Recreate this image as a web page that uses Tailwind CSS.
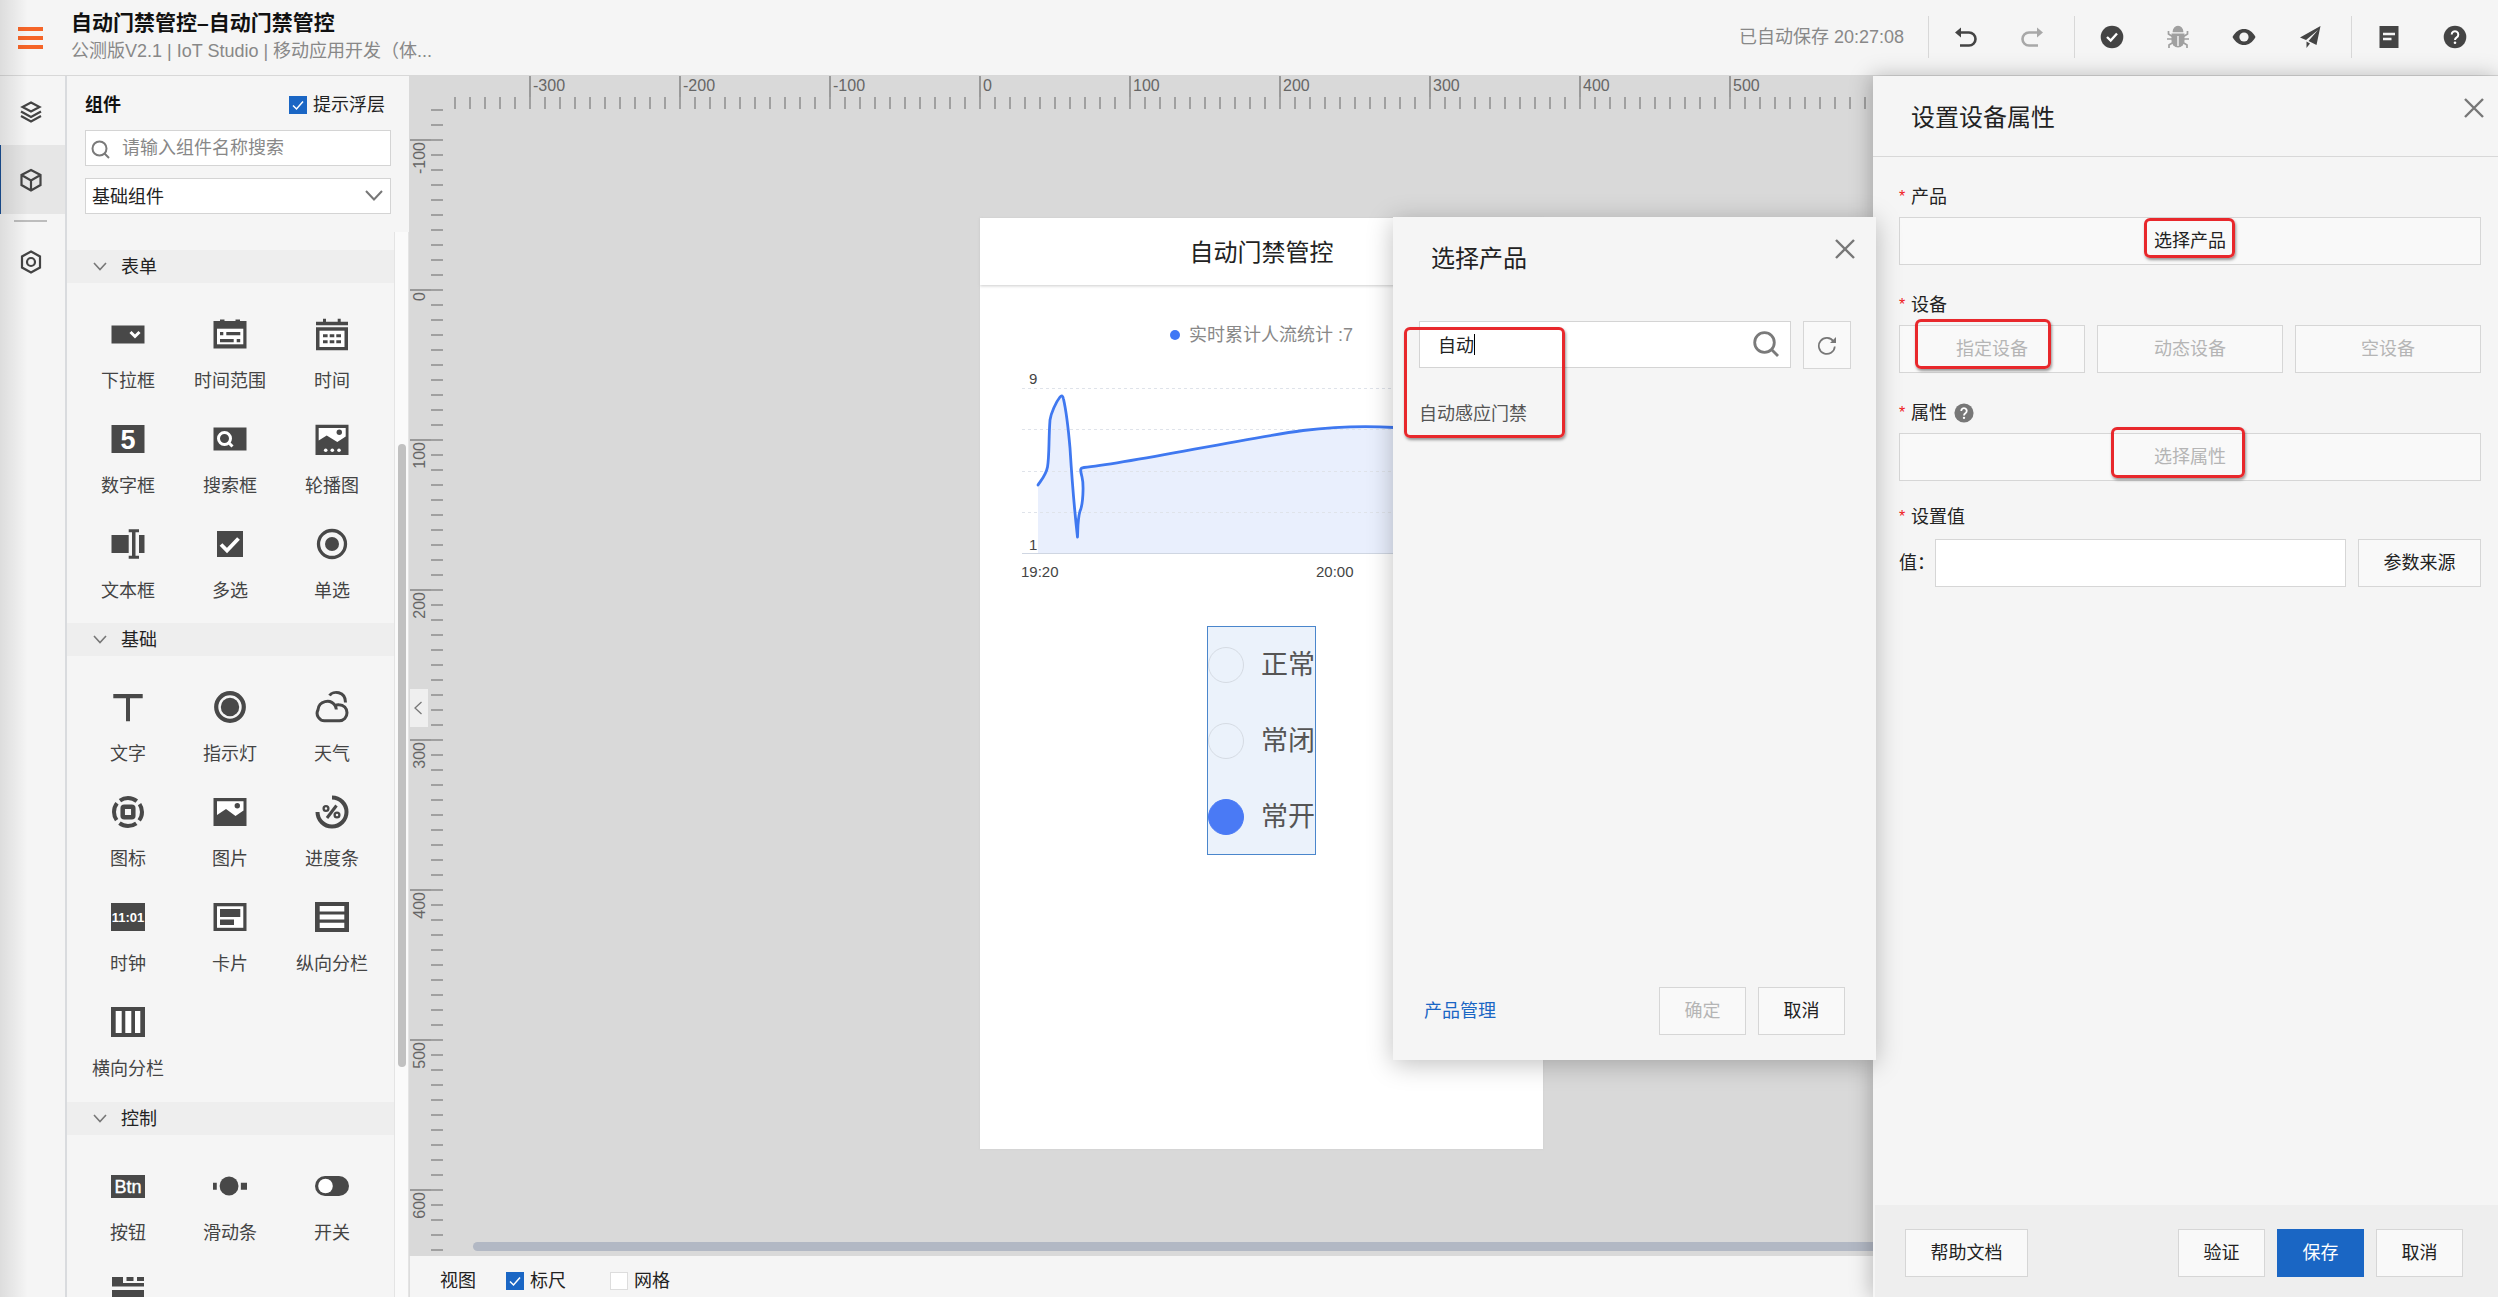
<!DOCTYPE html>
<html lang="zh-CN">
<head>
<meta charset="utf-8">
<title>自动门禁管控 - IoT Studio</title>
<script src="https://cdn.jsdelivr.net/npm/@tailwindcss/browser@4"></script>
</head>
<body class="relative flex h-screen flex-col overflow-hidden bg-[#f5f5f5] font-['Liberation_Sans','Noto_Sans_CJK_SC',sans-serif] text-lg leading-6 text-[#222]">

<!-- Top bar -->
<header class="flex h-[76px] shrink-0 items-center border-b border-[#d8d8d8] pb-0.5">
  <button aria-label="菜单" class="mt-0.5 ml-[18px] flex w-[25px] flex-col gap-[5px]">
    <span class="h-1 w-full bg-[#f56528]"></span><span class="h-1 w-full bg-[#f56528]"></span><span class="h-1 w-full bg-[#f56528]"></span>
  </button>
  <div class="ml-7 whitespace-nowrap">
    <h1 class="text-[21px] leading-7 font-bold text-[#111]">自动门禁管控–自动门禁管控</h1>
    <p class="leading-7 text-[#888]">公测版V2.1 | IoT Studio | 移动应用开发（体...</p>
  </div>
  <div class="mr-[10px] ml-auto flex items-center text-[#444] [&_button]:flex [&_button]:w-[66px] [&_button]:justify-center [&_svg]:size-6">
    <span class="mr-6 text-[#888]">已自动保存 20:27:08</span>
    <span class="mr-1 h-[42px] w-px bg-[#d8d8d8]"></span>
    <button aria-label="撤销"><svg viewBox="0 0 24 24" fill="none" stroke="currentColor" stroke-width="2.6"><path d="M4 7.500H15a6.500 6.500 0 0 1 0 13H6"/><path d="M1 7.500 7 2.500V12.500Z" fill="currentColor" stroke="none"/></svg></button>
    <button aria-label="重做" disabled class="text-[#a8a8a8]"><svg viewBox="0 0 24 24" fill="none" stroke="currentColor" stroke-width="2.600"><path d="M20 7.500H9a6.500 6.500 0 0 0 0 13H18"/><path d="M23 7.500 17 2.500V12.500Z" fill="currentColor" stroke="none"/></svg></button>
    <span class="mr-1 ml-[9px] h-[42px] w-px bg-[#d8d8d8]"></span>
    <button aria-label="验证"><svg viewBox="0 0 24 24"><circle cx="12" cy="12" r="11.300" fill="currentColor"/><path d="M7 12l3.700 3.600L17 8.500" fill="none" stroke="#fff" stroke-width="2.400"/></svg></button>
    <button aria-label="调试" class="text-[#a0a0a0]"><svg viewBox="0 0 24 24" fill="none" stroke="currentColor" stroke-width="1.700"><path d="M7.500 6.500a4.500 5 0 0 1 9 0Z" fill="currentColor"/><path d="M5.500 8.500h13v7.500a6.500 6.500 0 0 1-13 0Z" fill="currentColor" stroke="none"/><path d="M12 11v10" stroke="#f5f5f5" stroke-width="1.400"/><path d="M2.500 6v3l4 2.500M21.500 6v3l-4 2.500M1 14h5M23 14h-5M3 23v-3l4-2.500M21 23v-3l-4-2.500"/></svg></button>
    <button aria-label="预览"><svg viewBox="0 0 24 24"><path d="M.5 12C3.500 6.500 7.500 4 12 4s8.500 2.500 11.500 8C20.500 17.500 16.500 20 12 20S3.500 17.500.5 12Z" fill="currentColor"/><circle cx="12" cy="12" r="4.600" fill="#f5f5f5"/></svg></button>
    <button aria-label="发布"><svg viewBox="0 0 24 24" fill="currentColor"><path d="M22.500 1 2 12.500l6 2.500L20 5 10.500 16 18.500 20Z"/><path d="M8.500 16.500V23l3.500-4.500Z"/></svg></button>
    <span class="mr-1 ml-2 h-[42px] w-px bg-[#d8d8d8]"></span>
    <button aria-label="文档"><svg viewBox="0 0 24 24"><path d="M2.500 1h19v22h-19Z" fill="currentColor"/><path d="M6 9h12M6 14h8.500" stroke="#f5f5f5" stroke-width="2.400"/></svg></button>
    <button aria-label="帮助"><svg viewBox="0 0 24 24"><circle cx="12" cy="12" r="11.300" fill="currentColor"/><path d="M8.700 9.500a3.300 3.300 0 1 1 5 2.800c-1.200.8-1.700 1.300-1.700 2.700" fill="none" stroke="#fff" stroke-width="2"/><circle cx="12" cy="17.800" r="1.300" fill="#fff"/></svg></button>
  </div>
</header>

<div class="flex min-h-0 flex-1">

  <!-- Icon rail -->
  <nav class="flex w-[67px] shrink-0 flex-col border-r-2 border-[#d9dbde] text-[#444] [&_svg]:size-6">
    <button aria-label="图层" class="flex h-[69px] items-center justify-center pt-0.5 pr-1"><svg viewBox="0 0 24 24" fill="none" stroke="currentColor" stroke-width="2.200"><path d="M12 2.500 20.500 7 12 11.500 3.500 7Z"/><path d="M2 11.500 12 17l10-5.500M2 16l10 5.500L22 16"/></svg></button>
    <button aria-label="组件" class="flex h-[69px] items-center justify-center border-l border-[#1a4f94] bg-[#e6e6e6] pr-1"><svg viewBox="0 0 24 24" fill="none" stroke="currentColor" stroke-width="2.200"><path d="M12 2 21.500 7v10L12 22.500 2.500 17V7ZM2.500 7 12 12.500 21.500 7M12 12.500v10"/></svg></button>
    <span class="mt-1.5 ml-[14px] h-0.5 w-[33px] bg-[#bdbdbd]"></span>
    <button aria-label="设置" class="mt-1 flex h-[70px] items-center justify-center pt-0.5 pr-1"><svg viewBox="0 0 24 24" fill="none" stroke="currentColor" stroke-width="2.200"><path d="M12 1.500 21 6.500v11L12 22.500 3 17.500v-11Z"/><circle cx="12" cy="12" r="4"/></svg></button>
  </nav>

  <!-- Component library -->
  <aside class="flex w-[342px] shrink-0 flex-col">
    <div class="flex h-[156px] shrink-0 flex-col px-[18px] pt-4">
      <div class="flex h-[26px] items-center justify-between pr-1.5">
        <h2 class="font-bold text-[#111]">组件</h2>
        <label class="relative flex items-center gap-1.5"><input type="checkbox" checked class="size-[18px] appearance-none border border-[#ccc] bg-white checked:border-[#1a66c4] checked:bg-[#1a66c4]"><svg class="pointer-events-none absolute left-0 size-[18px]" viewBox="0 0 18 18" fill="none" stroke="#fff" stroke-width="1.500"><path d="M4 9.500l3.500 3.500L14 5.500"/></svg>提示浮层</label>
      </div>
      <div class="relative mt-3">
        <svg class="absolute top-2.5 left-[6px] size-5" viewBox="0 0 20 20" fill="none" stroke="#7a7a7a" stroke-width="2"><circle cx="8.500" cy="8.500" r="7"/><path d="M13.500 13.500 18 18"/></svg>
        <input type="text" aria-label="搜索组件" placeholder="请输入组件名称搜索" class="block h-9 w-full border border-[#d4d4d4] bg-white pl-9 placeholder:text-[#888]">
      </div>
      <div class="relative mt-3">
        <select aria-label="组件分类" class="block h-9 w-full appearance-none border border-[#d4d4d4] bg-white pt-0.5 pl-1.5"><option>基础组件</option></select>
        <svg class="pointer-events-none absolute top-2.5 right-[7px] h-4 w-5" viewBox="0 0 20 16" fill="none" stroke="#777" stroke-width="2"><path d="M2 3l8 8.500L18 3"/></svg>
      </div>
    </div>
    <div class="flex min-h-0 flex-1 overflow-hidden">
      <div class="w-[327px] pt-[18px] text-[#444] [&_button.tile]:flex [&_button.tile]:h-[105px] [&_button.tile]:flex-col [&_button.tile]:items-center [&_button.tile]:gap-[18px] [&_button.tile]:pt-[21px] [&_button.tile]:whitespace-nowrap [&_button.tile>svg]:size-[34px] [&_button.tile>svg]:shrink-0">

        <button class="flex h-[33px] w-full items-center gap-[14px] bg-[#eee] pl-[26px] text-[#222]"><svg class="h-3 w-[14px]" viewBox="0 0 14 12" fill="none" stroke="#777" stroke-width="1.600"><path d="M1 2l6 6.500L13 2"/></svg>表单</button>
        <div class="grid grid-cols-[102px_102px_102px] pt-[13px] pb-3 pl-[10px]">
          <button class="tile"><svg viewBox="0 0 34 34"><path d="M.5 8.500h33v18H.5Z" fill="#484848"/><path d="M19.500 15l4.500 4.500 4.500-4.500" fill="none" stroke="#fff" stroke-width="3"/></svg>下拉框</button>
          <button class="tile"><svg viewBox="0 0 34 34"><path d="M.5 4H7V2.500h4.500V4h11V2.500H27V4h6.500v27.500H.5Z" fill="#484848"/><path d="M4 11.700h26.300v15.600H4Z" fill="#fff"/><path d="M7 15h3.300v3.300H7ZM13.300 15h14v3.300h-14ZM7 22h13.700v3.300H7ZM23.700 22h3.500v3.300h-3.500Z" fill="#484848"/></svg>时间范围</button>
          <button class="tile"><svg viewBox="0 0 34 34"><path d="M1 4.700h7v-3h3v3h11.700v-3h3v3H33v3.600H1ZM1 10.300h32v23H1Z" fill="#484848"/><path d="M4.500 13.700h25v16.300h-25Z" fill="#fff"/><path d="M8 17.300h4.600v3H8ZM14.700 17.300h4.600v3h-4.600ZM21.300 17.300H26v3h-4.700ZM8 23.300h4.600v3H8ZM14.700 23.300h4.600v3h-4.600ZM21.300 23.300H26v3h-4.700Z" fill="#484848"/></svg>时间</button>
          <button class="tile"><svg viewBox="0 0 34 34"><path d="M.5 3h33v28H.5Z" fill="#484848"/><text x="17" y="26.500" text-anchor="middle" font-size="27" font-weight="bold" fill="#fff">5</text></svg>数字框</button>
          <button class="tile"><svg viewBox="0 0 34 34"><path d="M.5 5.500h33v23H.5Z" fill="#484848"/><g fill="none" stroke="#fff" stroke-width="3"><circle cx="11.500" cy="16.500" r="6"/><path d="M15 20l4.500 4.500"/></g></svg>搜索框</button>
          <button class="tile"><svg viewBox="0 0 34 34"><path d="M.5 2.700h33V33H.5Z" fill="#484848"/><path d="M3.700 6h27v8.500L22.300 20l-10.600-6.500-8 5Z" fill="#fff"/><circle cx="24.300" cy="10.300" r="2.700" fill="#484848"/><g fill="#fff"><circle cx="10.700" cy="28.300" r="1.800"/><circle cx="17.300" cy="28.300" r="1.800"/><circle cx="24" cy="28.300" r="1.800"/></g></svg>轮播图</button>
          <button class="tile"><svg viewBox="0 0 34 34" fill="#484848"><path d="M.5 8h17.200v18H.5ZM28 8h5.500v18H28ZM17.700 2.300H28v3h-3.500v23.400H28v3H17.700v-3H21V5.300h-3.300Z"/></svg>文本框</button>
          <button class="tile"><svg viewBox="0 0 34 34"><path d="M4 4h26v26H4Z" fill="#484848"/><path d="M8 17.500l6 6 11.500-12" fill="none" stroke="#fff" stroke-width="3.800"/></svg>多选</button>
          <button class="tile"><svg viewBox="0 0 34 34"><circle cx="17" cy="17" r="13.500" fill="none" stroke="#484848" stroke-width="3.300"/><circle cx="17" cy="17" r="7" fill="#484848"/></svg>单选</button>
        </div>

        <button class="flex h-[33px] w-full items-center gap-[14px] bg-[#eee] pl-[26px] text-[#222]"><svg class="h-3 w-[14px]" viewBox="0 0 14 12" fill="none" stroke="#777" stroke-width="1.600"><path d="M1 2l6 6.500L13 2"/></svg>基础</button>
        <div class="grid grid-cols-[102px_102px_102px] pt-[13px] pb-[13px] pl-[10px]">
          <button class="tile"><svg viewBox="0 0 34 34" fill="#484848"><path d="M2.300 4h29.400v4.300H19v23h-4v-23H2.300Z"/></svg>文字</button>
          <button class="tile"><svg viewBox="0 0 34 34"><circle cx="17" cy="17" r="13.800" fill="none" stroke="#484848" stroke-width="4.200"/><circle cx="17" cy="17" r="9.200" fill="#484848"/></svg>指示灯</button>
          <button class="tile"><svg viewBox="0 0 34 34" fill="none" stroke="#484848" stroke-width="3"><path d="M10 30.700a7.500 7.500 0 0 1-7-11A9.300 9.300 0 0 1 20 15.500q2-1 4-.8c4.700 0 8 3.500 8 8 0 4.700-3.300 8-7.500 8ZM20 15.500q1.200 2 1.300 4"/><path d="M14.500 5.500C18 .5 30.500 1 30.500 12.500"/></svg>天气</button>
          <button class="tile"><svg viewBox="0 0 34 34" fill="none" stroke="#484848"><circle cx="17" cy="17" r="14" stroke-width="4" stroke-dasharray="18 4" stroke-dashoffset="9"/><rect x="11.700" y="11.700" width="10.600" height="10.600" rx="1.500" stroke-width="4.500"/></svg>图标</button>
          <button class="tile"><svg viewBox="0 0 34 34"><path d="M.5 3h33v28H.5Z" fill="#484848"/><path d="M4 6.300h26.500v9.200L22.500 21 13 14l-9 6Z" fill="#fff"/><circle cx="24.300" cy="10.800" r="2.700" fill="#484848"/></svg>图片</button>
          <button class="tile"><svg viewBox="0 0 34 34" fill="none" stroke="#484848"><path d="M17 2.500A14.500 14.500 0 1 1 2.500 17" stroke-width="4"/><g stroke-width="2.300"><circle cx="11" cy="13.500" r="2.400"/><circle cx="22" cy="20" r="2.400"/><path d="M21.500 10.500 12 23" stroke-width="3"/></g></svg>进度条</button>
          <button class="tile"><svg viewBox="0 0 34 34"><path d="M0 3h34v28H0Z" fill="#484848"/><text x="17" y="22" text-anchor="middle" font-size="13" font-weight="bold" fill="#fff">11:01</text></svg>时钟</button>
          <button class="tile"><svg viewBox="0 0 34 34"><path d="M.5 3h33v28H.5Z" fill="#484848"/><path d="M4 6.300h26.300v21.500H4Z" fill="#fff"/><path d="M7 9h20.300v8H7ZM7 19.500h14V25H7Z" fill="#484848"/></svg>卡片</button>
          <button class="tile"><svg viewBox="0 0 34 34"><path d="M0 2h34v30H0Z" fill="#484848"/><path d="M4.700 6h24.600v5.500H4.700ZM4.700 14.500h24.600v5H4.700ZM4.700 22.700h24.600V28H4.700Z" fill="#fff"/></svg>纵向分栏</button>
          <button class="tile"><svg viewBox="0 0 34 34"><path d="M0 2h34v30H0Z" fill="#484848"/><path d="M4.700 6h6v22h-6ZM14.300 6h6v22h-6ZM24 6h5.300v22H24Z" fill="#fff"/></svg>横向分栏</button>
        </div>

        <button class="flex h-[33px] w-full items-center gap-[14px] bg-[#eee] pl-[26px] text-[#222]"><svg class="h-3 w-[14px]" viewBox="0 0 14 12" fill="none" stroke="#777" stroke-width="1.600"><path d="M1 2l6 6.500L13 2"/></svg>控制</button>
        <div class="grid grid-cols-[102px_102px_102px] pt-[13px] pl-[10px]">
          <button class="tile"><svg viewBox="0 0 34 34"><path d="M0 6h34v23H0Z" fill="#484848"/><text x="17" y="23.500" text-anchor="middle" font-size="18" fill="#fff" stroke="#fff" stroke-width=".4">Btn</text></svg>按钮</button>
          <button class="tile"><svg viewBox="-1 0 36 34" fill="#484848"><circle cx="16" cy="17" r="10"/><path d="M-1 13.500h4v7.500h-4ZM28.500 13.500H35V21h-6.500Z"/></svg>滑动条</button>
          <button class="tile"><svg viewBox="0 0 34 34"><rect y="7" width="34" height="20" rx="10" fill="#484848"/><circle cx="10.500" cy="17" r="7.300" fill="#fff"/></svg>开关</button>
          <button class="tile" aria-label="选项卡"><svg viewBox="0 0 34 34" fill="#484848"><path d="M1 3h11v6h21v3.500H1ZM15.500 3h7v4h-7ZM26 3h7v4h-7ZM1 16h32v16H1Z"/></svg></button>
        </div>
      </div>
      <div class="w-[15px] border-x border-[#e4e4e4] bg-[#fafafa] pt-[212px]"><div class="ml-[3px] h-[623px] w-2 rounded-full bg-[#c1c1c1]"></div></div>
    </div>
  </aside>

  <!-- Canvas -->
  <main class="flex min-w-0 flex-1 flex-col">
    <div class="relative min-h-0 flex-1 overflow-hidden bg-[#d9d9d9] text-base leading-5 text-[#666]">
      <!-- Horizontal ruler -->
      <div class="absolute top-0 right-0 left-[45px] flex h-[33px] overflow-hidden [&>span]:h-[33px] [&>span]:w-[150px] [&>span]:shrink-0 [&>span]:border-l-2 [&>span]:border-[#999] [&>span]:pl-0.5">
        <i class="w-[75px] shrink-0"></i><span>-300</span><span>-200</span><span>-100</span><span>0</span><span>100</span><span>200</span><span>300</span><span>400</span><span>500</span>
        <i class="absolute inset-x-0 bottom-0 h-3 bg-[repeating-linear-gradient(90deg,#a0a0a0_0,#a0a0a0_2px,transparent_2px,transparent_15px)]"></i>
      </div>
      <!-- Vertical ruler -->
      <div class="absolute top-[33px] bottom-0 left-px flex w-[33px] flex-col overflow-hidden [&>span]:h-[150px] [&>span]:w-[33px] [&>span]:shrink-0 [&>span]:border-t-2 [&>span]:border-[#999] [&>span]:pt-px [&_b]:block [&_b]:rotate-180 [&_b]:font-normal [&_b]:[writing-mode:vertical-rl]">
        <i class="h-[30px] shrink-0"></i><span><b>-100</b></span><span><b>0</b></span><span><b>100</b></span><span><b>200</b></span><span><b>300</b></span><span><b>400</b></span><span><b>500</b></span><span><b>600</b></span>
        <i class="absolute inset-y-0 right-0 w-3 bg-[repeating-linear-gradient(180deg,#a0a0a0_0,#a0a0a0_2px,transparent_2px,transparent_15px)]"></i>
      </div>
      <button aria-label="收起面板" class="absolute top-[613px] left-px flex h-[38px] w-[18px] items-center justify-center bg-[#efefef] pr-0.5"><svg class="h-[14px] w-2" viewBox="0 0 8 14" fill="none" stroke="#777" stroke-width="1.300"><path d="M7.500 1 1 7l6.500 6"/></svg></button>

      <!-- Mobile page -->
      <section class="absolute top-[142px] left-[571px] flex h-[931px] w-[563px] flex-col items-center bg-white shadow-[0_0_2px_#ccc]">
        <h2 class="flex h-[67px] w-full shrink-0 items-center justify-center pt-0.5 text-2xl text-[#222] shadow-[0_1px_3px_#ccc]">自动门禁管控</h2>
        <p class="mt-9 flex items-center gap-[9px] text-lg leading-7 text-[#888]"><span class="size-[10px] rounded-full bg-[#3f78f5]"></span>实时累计人流统计 :7</p>
        <svg class="h-[242px] w-full" viewBox="980 349 563 242" font-size="15" fill="#444">
          <path d="M1038 485C1042 479 1046 475 1047.500 467C1049.500 455 1048.500 440 1050 420C1051 413 1056 402 1060 397Q1062.500 394 1063.500 399C1066 410 1068 425 1070 448C1072 480 1075 515 1077.500 537C1078 528 1077.500 520 1080 511C1083 505 1084 485 1082 477C1080 469 1080 468 1084 467.500C1130 463 1240 439 1303 430.500C1340 426 1370 426 1394 427.500V553H1038Z" fill="#e9effd"/>
          <path d="M1022 388.500H1510M1022 429.500H1510M1022 471.500H1510M1022 512.500H1510" stroke="#dfe3ea" stroke-dasharray="3 3"/>
          <path d="M1022 553.500H1510" stroke="#cfd6e2"/>
          <path d="M1038 485C1042 479 1046 475 1047.500 467C1049.500 455 1048.500 440 1050 420C1051 413 1056 402 1060 397Q1062.500 394 1063.500 399C1066 410 1068 425 1070 448C1072 480 1075 515 1077.500 537C1078 528 1077.500 520 1080 511C1083 505 1084 485 1082 477C1080 469 1080 468 1084 467.500C1130 463 1240 439 1303 430.500C1340 426 1370 426 1394 427.500" fill="none" stroke="#3f78f0" stroke-width="2.800" stroke-linejoin="round" stroke-linecap="round"/>
          <text x="1029" y="384">9</text><text x="1029" y="550">1</text><text x="1021" y="577">19:20</text><text x="1316" y="577">20:00</text>
        </svg>
        <fieldset class="mt-[35px] flex h-[229px] w-[108px] shrink-0 flex-col gap-10 border border-[#4a86cc] bg-[#ebf2fb] pt-5 text-[27px] leading-9 text-[#555] [&>label]:flex [&>label]:h-9 [&>label]:items-center [&>label]:gap-[17px] [&>label]:whitespace-nowrap [&_input]:size-9 [&_input]:shrink-0 [&_input]:appearance-none [&_input]:rounded-full [&_input]:border [&_input]:border-[#d5dbe3] [&_input:checked]:border-[#4a7af5] [&_input:checked]:bg-[#4a7af5]">
          <label><input type="radio" name="mode">正常</label>
          <label><input type="radio" name="mode">常闭</label>
          <label><input type="radio" name="mode" checked>常开</label>
        </fieldset>
      </section>

      <div class="absolute right-0 bottom-[5px] left-16 h-[9px] rounded-l-full bg-[#b2b8c4]"></div>
    </div>
    <footer class="flex h-[41px] shrink-0 items-center border-l border-[#ddd] pt-2 pl-[30px] text-[#222]">
      <span>视图</span>
      <label class="relative ml-[30px] flex items-center gap-1.5"><input type="checkbox" checked class="size-[18px] appearance-none border border-[#ccc] bg-white checked:border-[#1a66c4] checked:bg-[#1a66c4]"><svg class="pointer-events-none absolute left-0 size-[18px]" viewBox="0 0 18 18" fill="none" stroke="#fff" stroke-width="1.500"><path d="M4 9.500l3.500 3.500L14 5.500"/></svg>标尺</label>
      <label class="ml-11 flex items-center gap-1.5"><input type="checkbox" class="size-[18px] appearance-none border border-[#ddd] bg-white">网格</label>
    </footer>
  </main>

  <!-- Device property drawer -->
  <aside class="z-10 flex w-[625px] shrink-0 flex-col bg-[#f5f5f5] shadow-[-2px_0_20px_rgba(0,0,0,0.25)] [&_button.box]:h-12 [&_button.box]:border [&_button.box]:border-[#d6d6d6] [&_button.box]:bg-[#f9f9f9] [&_button.box:disabled]:text-[#b5b5b5]">
    <div class="flex h-[81px] shrink-0 justify-between border-b border-[#d8d8d8] pr-[14px] pl-[38px]">
      <h2 class="pt-[26px] text-2xl leading-8">设置设备属性</h2>
      <button aria-label="关闭" class="mt-[22px] size-5"><svg viewBox="0 0 20 20" fill="none" stroke="#777" stroke-width="2.400"><path d="M1 1l18 18M19 1 1 19"/></svg></button>
    </div>
    <div class="flex-1 pt-7 pr-[17px] pl-[26px] [&_p]:flex [&_p]:h-6 [&_p]:items-center [&_p>i]:mr-[5px] [&_p>i]:h-6 [&_p>i]:w-[7px] [&_p>i]:text-base [&_p>i]:text-[#f02020] [&_p>i]:not-italic">
      <p><i>*</i>产品</p>
      <div class="relative mt-2 flex"><button class="box flex-1">选择产品</button><span class="pointer-events-none absolute top-px left-[245px] h-10 w-[91px] rounded-md border-3 border-[#e8282c] shadow-[1px_2px_3px_rgba(0,0,0,0.4)]"></span></div>
      <p class="mt-7"><i>*</i>设备</p>
      <div class="relative mt-2 grid grid-cols-3 gap-3"><button class="box" disabled>指定设备</button><button class="box" disabled>动态设备</button><button class="box" disabled>空设备</button><span class="pointer-events-none absolute -top-[6px] left-4 h-[50px] w-[136px] rounded-md border-3 border-[#e8282c] shadow-[1px_2px_3px_rgba(0,0,0,0.4)]"></span></div>
      <p class="mt-7"><i>*</i>属性<svg class="ml-[7px] size-5" viewBox="0 0 24 24"><circle cx="12" cy="12" r="11.500" fill="#777"/><path d="M8.700 9.500a3.300 3.300 0 1 1 5 2.800c-1.200.8-1.700 1.300-1.700 2.700" fill="none" stroke="#fff" stroke-width="2.200"/><circle cx="12" cy="17.800" r="1.400" fill="#fff"/></svg></p>
      <div class="relative mt-2 flex"><button class="box flex-1" disabled>选择属性</button><span class="pointer-events-none absolute -top-[6px] left-[212px] h-[51px] w-[134px] rounded-md border-3 border-[#e8282c] shadow-[1px_2px_3px_rgba(0,0,0,0.4)]"></span></div>
      <p class="mt-6"><i>*</i>设置值</p>
      <div class="mt-2.5 flex items-center"><label for="val" class="w-9">值：</label><input id="val" type="text" class="h-12 min-w-0 flex-1 border border-[#d6d6d6] bg-white px-3"><button class="box ml-3 w-[123px]">参数来源</button></div>
    </div>
    <div class="ml-0.5 flex h-[92px] shrink-0 items-center gap-3 bg-[#eee] pt-1 pr-[35px] pl-[30px]">
      <button class="box mr-auto w-[123px]">帮助文档</button>
      <button class="box w-[87px]">验证</button>
      <button class="h-12 w-[87px] bg-[#1a66c4] text-white">保存</button>
      <button class="box w-[87px]">取消</button>
    </div>
  </aside>
</div>

<!-- Product picker dialog -->
<div role="dialog" aria-label="选择产品" class="absolute top-[217px] right-[622px] z-20 flex h-[843px] w-[483px] flex-col bg-[#f5f5f5] shadow-[0_4px_24px_rgba(0,0,0,0.25)] [&_button.box]:h-12 [&_button.box]:border [&_button.box]:border-[#d6d6d6] [&_button.box]:bg-[#f9f9f9] [&_button.box:disabled]:text-[#b5b5b5]">
  <div class="flex h-[104px] shrink-0 justify-between pr-[21px] pl-[38px]">
    <h2 class="pt-[26px] text-2xl leading-8">选择产品</h2>
    <button aria-label="关闭" class="mt-[22px] size-5"><svg viewBox="0 0 20 20" fill="none" stroke="#777" stroke-width="2.400"><path d="M1 1l18 18M19 1 1 19"/></svg></button>
  </div>
  <div class="flex gap-3 pr-[25px] pl-[26px]">
    <div class="relative flex-1">
      <input type="text" aria-label="搜索产品" value="自动" class="h-[47px] w-full border border-[#d4d4d4] bg-white pb-0.5 pl-[18px]">
      <span class="absolute top-[13px] left-[55px] h-[21px] w-px bg-black"></span>
      <svg class="absolute top-2.5 right-3 size-[26px]" viewBox="0 0 26 26" fill="none" stroke="#7a7a7a" stroke-width="2.800"><circle cx="11.500" cy="11.500" r="9.800"/><path d="M18.500 18.500 25 25"/></svg>
    </div>
    <button aria-label="刷新" class="box flex w-12 items-center justify-center"><svg class="size-5" viewBox="0 0 20 20" fill="none" stroke="#777" stroke-width="1.700"><path d="M16.500 6.500A8 8 0 1 0 17.800 11.500"/><path d="M19 2v6h-6Z" fill="#777" stroke="none"/></svg></button>
  </div>
  <a href="#" class="mt-[33px] pl-[26px] text-[#555]">自动感应门禁</a>
  <div class="mt-auto mb-[25px] flex items-center gap-3 pr-[31px] pl-[31px]">
    <a href="#" class="mr-auto text-[#1a66c4]">产品管理</a>
    <button class="box w-[87px]" disabled>确定</button>
    <button class="box w-[87px]">取消</button>
  </div>
  <span class="pointer-events-none absolute top-[110px] left-[11px] h-[111px] w-[161px] rounded-md border-3 border-[#e8282c] shadow-[1px_2px_3px_rgba(0,0,0,0.4)]"></span>
</div>

<!-- Shade along the window's left edge -->
<div class="pointer-events-none absolute inset-y-0 left-0 w-7 bg-linear-to-r from-black/10 to-transparent"></div>
</body>
</html>
